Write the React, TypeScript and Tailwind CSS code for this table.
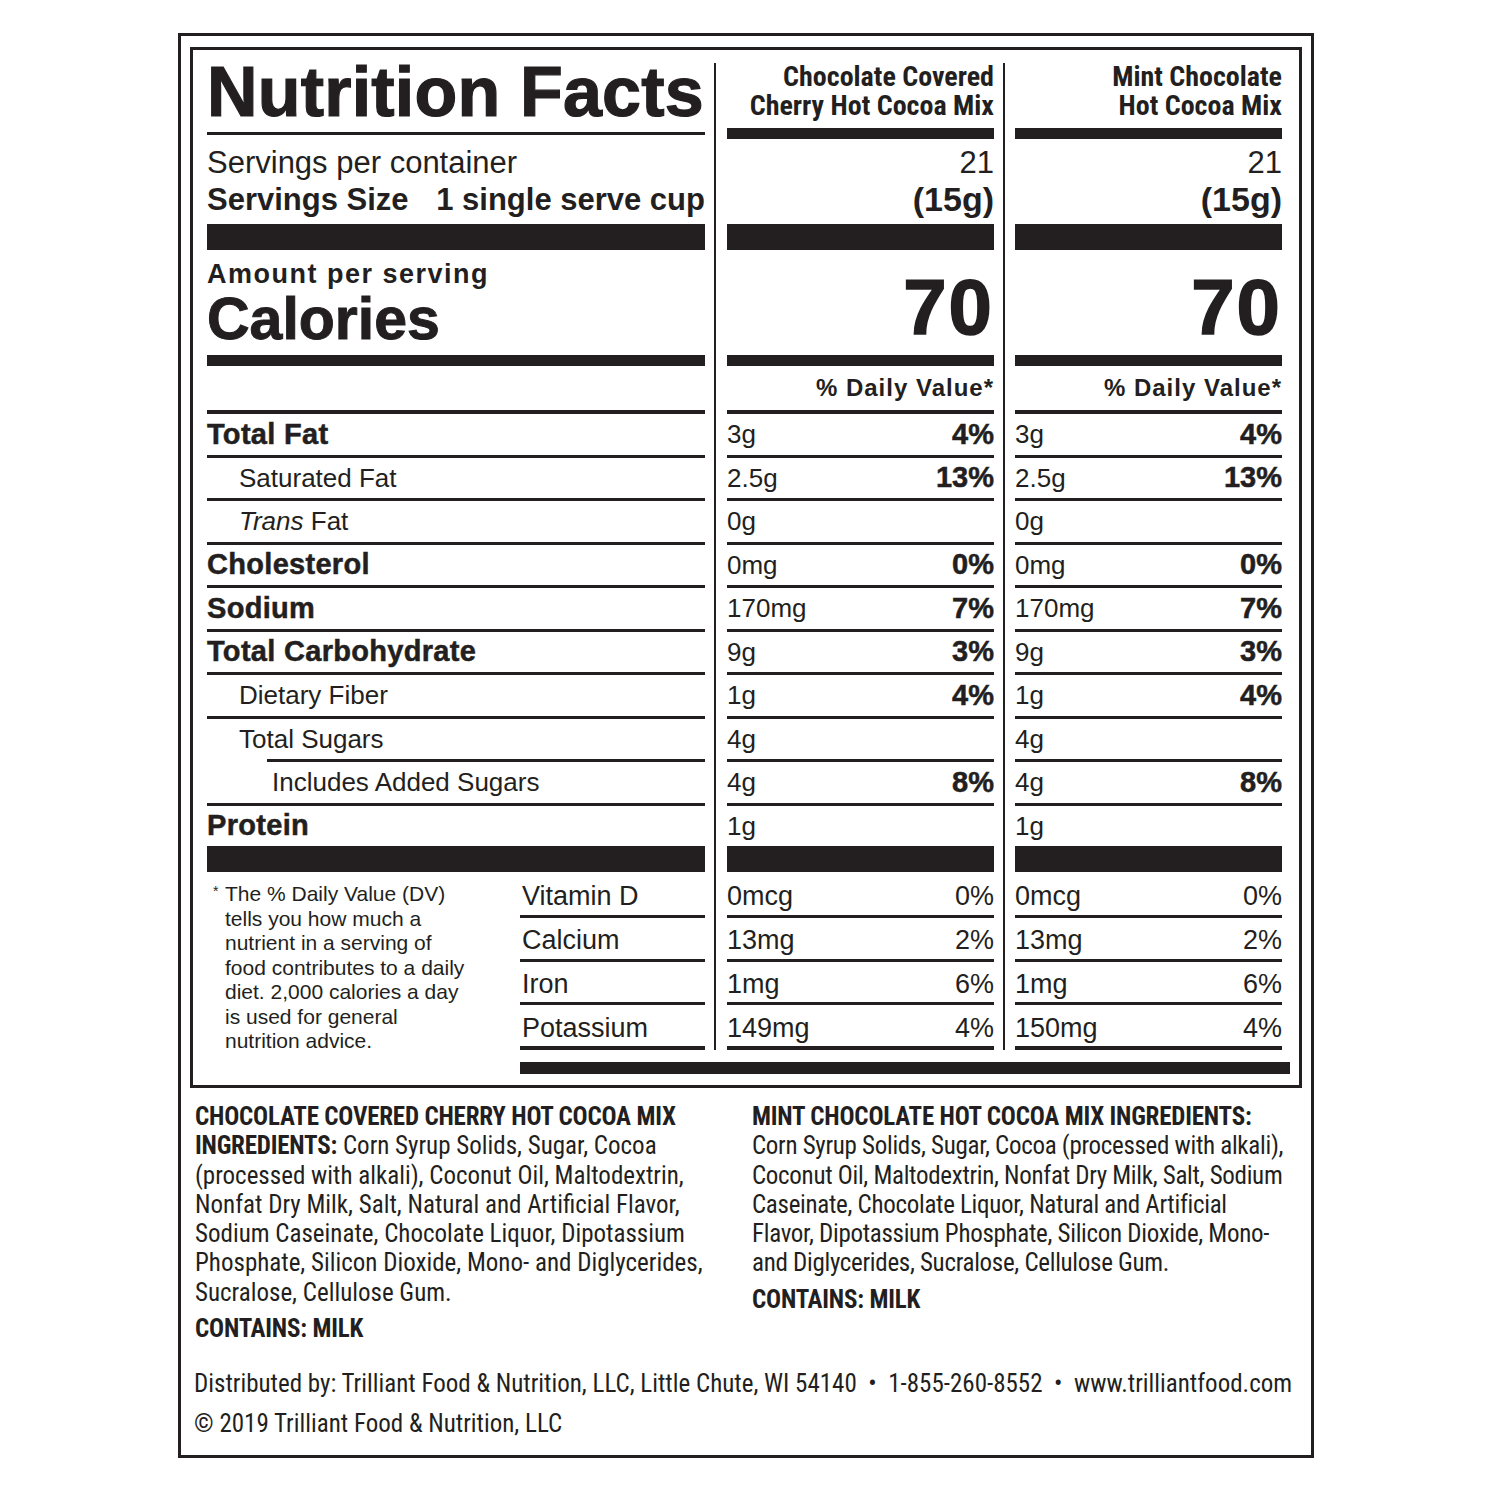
import React from 'react';

type Nutrient = {
  label: React.ReactNode;
  style: 'bold' | 'sub' | 'sub2';
  a: [string, string];
  b: [string, string];
  indentLine?: boolean;
  last?: boolean;
};

const nutrients: Nutrient[] = [
  { label: 'Total Fat', style: 'bold', a: ['3g', '4%'], b: ['3g', '4%'] },
  { label: 'Saturated Fat', style: 'sub', a: ['2.5g', '13%'], b: ['2.5g', '13%'] },
  { label: <><i>Trans</i>&nbsp;Fat</>, style: 'sub', a: ['0g', ''], b: ['0g', ''] },
  { label: 'Cholesterol', style: 'bold', a: ['0mg', '0%'], b: ['0mg', '0%'] },
  { label: 'Sodium', style: 'bold', a: ['170mg', '7%'], b: ['170mg', '7%'] },
  { label: 'Total Carbohydrate', style: 'bold', a: ['9g', '3%'], b: ['9g', '3%'] },
  { label: 'Dietary Fiber', style: 'sub', a: ['1g', '4%'], b: ['1g', '4%'] },
  { label: 'Total Sugars', style: 'sub', a: ['4g', ''], b: ['4g', ''], indentLine: true },
  { label: 'Includes Added Sugars', style: 'sub2', a: ['4g', '8%'], b: ['4g', '8%'] },
  { label: 'Protein', style: 'bold', a: ['1g', ''], b: ['1g', ''], last: true },
];

const vitamins: { label: string; a: [string, string]; b: [string, string] }[] = [
  { label: 'Vitamin D', a: ['0mcg', '0%'], b: ['0mcg', '0%'] },
  { label: 'Calcium', a: ['13mg', '2%'], b: ['13mg', '2%'] },
  { label: 'Iron', a: ['1mg', '6%'], b: ['1mg', '6%'] },
  { label: 'Potassium', a: ['149mg', '4%'], b: ['150mg', '4%'] },
];

// row heights for the vitamin block, last one sits on a heavier rule
const vitH = ['h-[46px]', 'h-[43.5px]', 'h-[43.5px]', 'h-[45px]'];

const COND = "font-['Roboto_Condensed','Roboto',sans-serif] font-stretch-condensed";

const Bar = ({ h }: { h: string }) => <div className={`${h} w-full shrink-0 bg-[#231f20]`} />;

function VitaminLine({ i }: { i: number }) {
  return <div className={i === 3 ? 'h-[4px] shrink-0 bg-[#231f20]' : 'h-[3px] shrink-0 bg-[#231f20]'} />;
}

function LeftColumn() {
  return (
    <div className="flex w-[498px] flex-col">
      <div className="h-[65px] whitespace-nowrap text-[70px] font-bold leading-[58px] tracking-[0.2px] [-webkit-text-stroke:1.2px_#231f20]">
        Nutrition Facts
      </div>
      <div className="flex h-[11px] items-center">
        <div className="h-[3px] w-full bg-[#231f20]" />
      </div>
      <div className="flex h-[85px] flex-col justify-center pb-[2px]">
        <div className="text-[31px] leading-[37px]">Servings per container</div>
        <div className="flex justify-between text-[31px] font-bold leading-[37px]">
          <span>Servings Size</span>
          <span>1 single serve cup</span>
        </div>
      </div>
      <Bar h="h-[26px]" />
      <div className="flex h-[105px] flex-col pt-[8px]">
        <div className="text-[27px] font-bold leading-[32px] tracking-[1.5px]">Amount per serving</div>
        <div className="text-[59px] font-bold leading-[58px] [-webkit-text-stroke:1px_#231f20]">Calories</div>
      </div>
      <Bar h="h-[11px]" />
      <div className="h-[44px]" />
      <Bar h="h-[4px]" />
      {nutrients.map((n, i) => (
        <div key={i} className={n.last ? 'flex h-[40.5px] flex-col' : 'flex h-[43.5px] flex-col'}>
          <div
            className={
              n.style === 'bold'
                ? 'flex min-h-0 flex-1 items-center text-[29px] font-bold leading-none tracking-[0.3px] [-webkit-text-stroke:0.5px_#231f20]'
                : n.style === 'sub'
                  ? 'flex min-h-0 flex-1 items-center pl-[32px] text-[26px] leading-none'
                  : 'flex min-h-0 flex-1 items-center pl-[65px] text-[26px] leading-none'
            }
          >
            {n.label}
          </div>
          {!n.last && <div className={n.indentLine ? 'ml-[60px] h-[3px] shrink-0 bg-[#231f20]' : 'h-[3px] shrink-0 bg-[#231f20]'} />}
        </div>
      ))}
      <Bar h="h-[26px]" />
      <div className="flex h-[178px]">
        <div className="flex flex-1 pl-[6px] pt-[10px]">
          <span className="mt-[2px] w-[12px] text-[14px] leading-none">*</span>
          <p className="text-[21px] leading-[24.5px]">
            The % Daily Value (DV)
            <br />
            tells you how much a
            <br />
            nutrient in a serving of
            <br />
            food contributes to a daily
            <br />
            diet. 2,000 calories a day
            <br />
            is used for general
            <br />
            nutrition advice.
          </p>
        </div>
        <div className="flex w-[185px] flex-col">
          {vitamins.map((v, i) => (
            <div key={v.label} className={`flex flex-col ${vitH[i]}`}>
              <div className="flex min-h-0 flex-1 items-center pl-[2px] pt-[5px] text-[27px] leading-none">{v.label}</div>
              <VitaminLine i={i} />
            </div>
          ))}
        </div>
      </div>
    </div>
  );
}

function ProductColumn({ title, k }: { title: [string, string]; k: 'a' | 'b' }) {
  return (
    <div className="flex w-[267px] flex-col">
      <div className={`flex h-[65px] flex-col items-end whitespace-nowrap text-[28px] font-bold leading-[28.5px] ${COND}`}>
        <span>{title[0]}</span>
        <span>{title[1]}</span>
      </div>
      <Bar h="h-[11px]" />
      <div className="flex h-[85px] flex-col items-end justify-center pb-[2px]">
        <div className="text-[31px] leading-[37px]">21</div>
        <div className="text-[34px] font-bold leading-[37px]">(15g)</div>
      </div>
      <Bar h="h-[26px]" />
      <div className="flex h-[105px] items-center justify-end pt-[8px]">
        <span className="text-[78px] font-bold leading-none tracking-[2px] [-webkit-text-stroke:1.5px_#231f20]">70</span>
      </div>
      <Bar h="h-[11px]" />
      <div className="flex h-[44px] items-center justify-end">
        <span className="text-[24px] font-bold tracking-[1px]">% Daily Value*</span>
      </div>
      <Bar h="h-[4px]" />
      {nutrients.map((n, i) => {
        const v = n[k];
        return (
          <div key={i} className={n.last ? 'flex h-[40.5px] flex-col' : 'flex h-[43.5px] flex-col'}>
            <div className="flex min-h-0 flex-1 items-center justify-between leading-none">
              <span className="text-[26px]">{v[0]}</span>
              <span className="text-[29px] font-bold [-webkit-text-stroke:0.5px_#231f20]">{v[1]}</span>
            </div>
            {!n.last && <div className="h-[3px] shrink-0 bg-[#231f20]" />}
          </div>
        );
      })}
      <Bar h="h-[26px]" />
      {vitamins.map((v, i) => (
        <div key={v.label} className={`flex flex-col ${vitH[i]}`}>
          <div className="flex min-h-0 flex-1 items-center justify-between pt-[5px] text-[27px] leading-none">
            <span>{v[k][0]}</span>
            <span>{v[k][1]}</span>
          </div>
          <VitaminLine i={i} />
        </div>
      ))}
    </div>
  );
}

const Divider = () => <div className="w-[2px] self-stretch bg-[#231f20]" />;

export default function App() {
  return (
    <div className="min-h-[1500px] bg-white pl-[178px] pt-[33px] font-['Liberation_Sans',Arial,sans-serif] text-[#231f20]">
      <div className="h-[1425px] w-[1136px] border-[3px] border-[#231f20] px-[9px] pt-[11px]">
        <div className="h-[1041px] border-[3px] border-[#231f20] pl-[14px] pr-[9px] pt-[13px]">
          <div className="flex">
            <LeftColumn />
            <div className="w-[9px]" />
            <Divider />
            <div className="w-[11px]" />
            <ProductColumn title={['Chocolate Covered', 'Cherry Hot Cocoa Mix']} k="a" />
            <div className="w-[9px]" />
            <Divider />
            <div className="w-[10px]" />
            <ProductColumn title={['Mint Chocolate', 'Hot Cocoa Mix']} k="b" />
          </div>
          <div className="ml-[313px] mt-[12px] h-[12px] w-[770px] bg-[#231f20]" />
        </div>

        <div className={`text-[25px] leading-[29.3px] ${COND}`}>
          <div className="flex pl-[5px] pt-[14px]">
            <div className="w-[557px] shrink-0 whitespace-nowrap">
              <p>
                <b className="tracking-[-0.2px]">
                  CHOCOLATE COVERED CHERRY HOT COCOA MIX
                  <br />
                  INGREDIENTS:
                </b>{' '}
                Corn Syrup Solids, Sugar, Cocoa
                <br />
                (processed with alkali), Coconut Oil, Maltodextrin,
                <br />
                Nonfat Dry Milk, Salt, Natural and Artificial Flavor,
                <br />
                Sodium Caseinate, Chocolate Liquor, Dipotassium
                <br />
                Phosphate, Silicon Dioxide, Mono- and Diglycerides,
                <br />
                Sucralose, Cellulose Gum.
              </p>
              <p className="mt-[7px] font-bold tracking-[-0.2px]">CONTAINS: MILK</p>
            </div>
            <div className="whitespace-nowrap tracking-[-0.3px]">
              <p>
                <b className="tracking-[-0.2px]">MINT CHOCOLATE HOT COCOA MIX INGREDIENTS:</b>
                <br />
                Corn Syrup Solids, Sugar, Cocoa (processed with alkali),
                <br />
                Coconut Oil, Maltodextrin, Nonfat Dry Milk, Salt, Sodium
                <br />
                Caseinate, Chocolate Liquor, Natural and Artificial
                <br />
                Flavor, Dipotassium Phosphate, Silicon Dioxide, Mono-
                <br />
                and Diglycerides, Sucralose, Cellulose Gum.
              </p>
              <p className="mt-[7px] font-bold tracking-[-0.2px]">CONTAINS: MILK</p>
            </div>
          </div>
          <div className="mt-[21px] whitespace-nowrap pl-[4px] leading-[40px]">
            <p>
              Distributed by: Trilliant Food &amp; Nutrition, LLC, Little Chute, WI 54140 &nbsp;•&nbsp; 1-855-260-8552 &nbsp;•&nbsp; www.trilliantfood.com
            </p>
            <p>© 2019 Trilliant Food &amp; Nutrition, LLC</p>
          </div>
        </div>
      </div>
    </div>
  );
}
